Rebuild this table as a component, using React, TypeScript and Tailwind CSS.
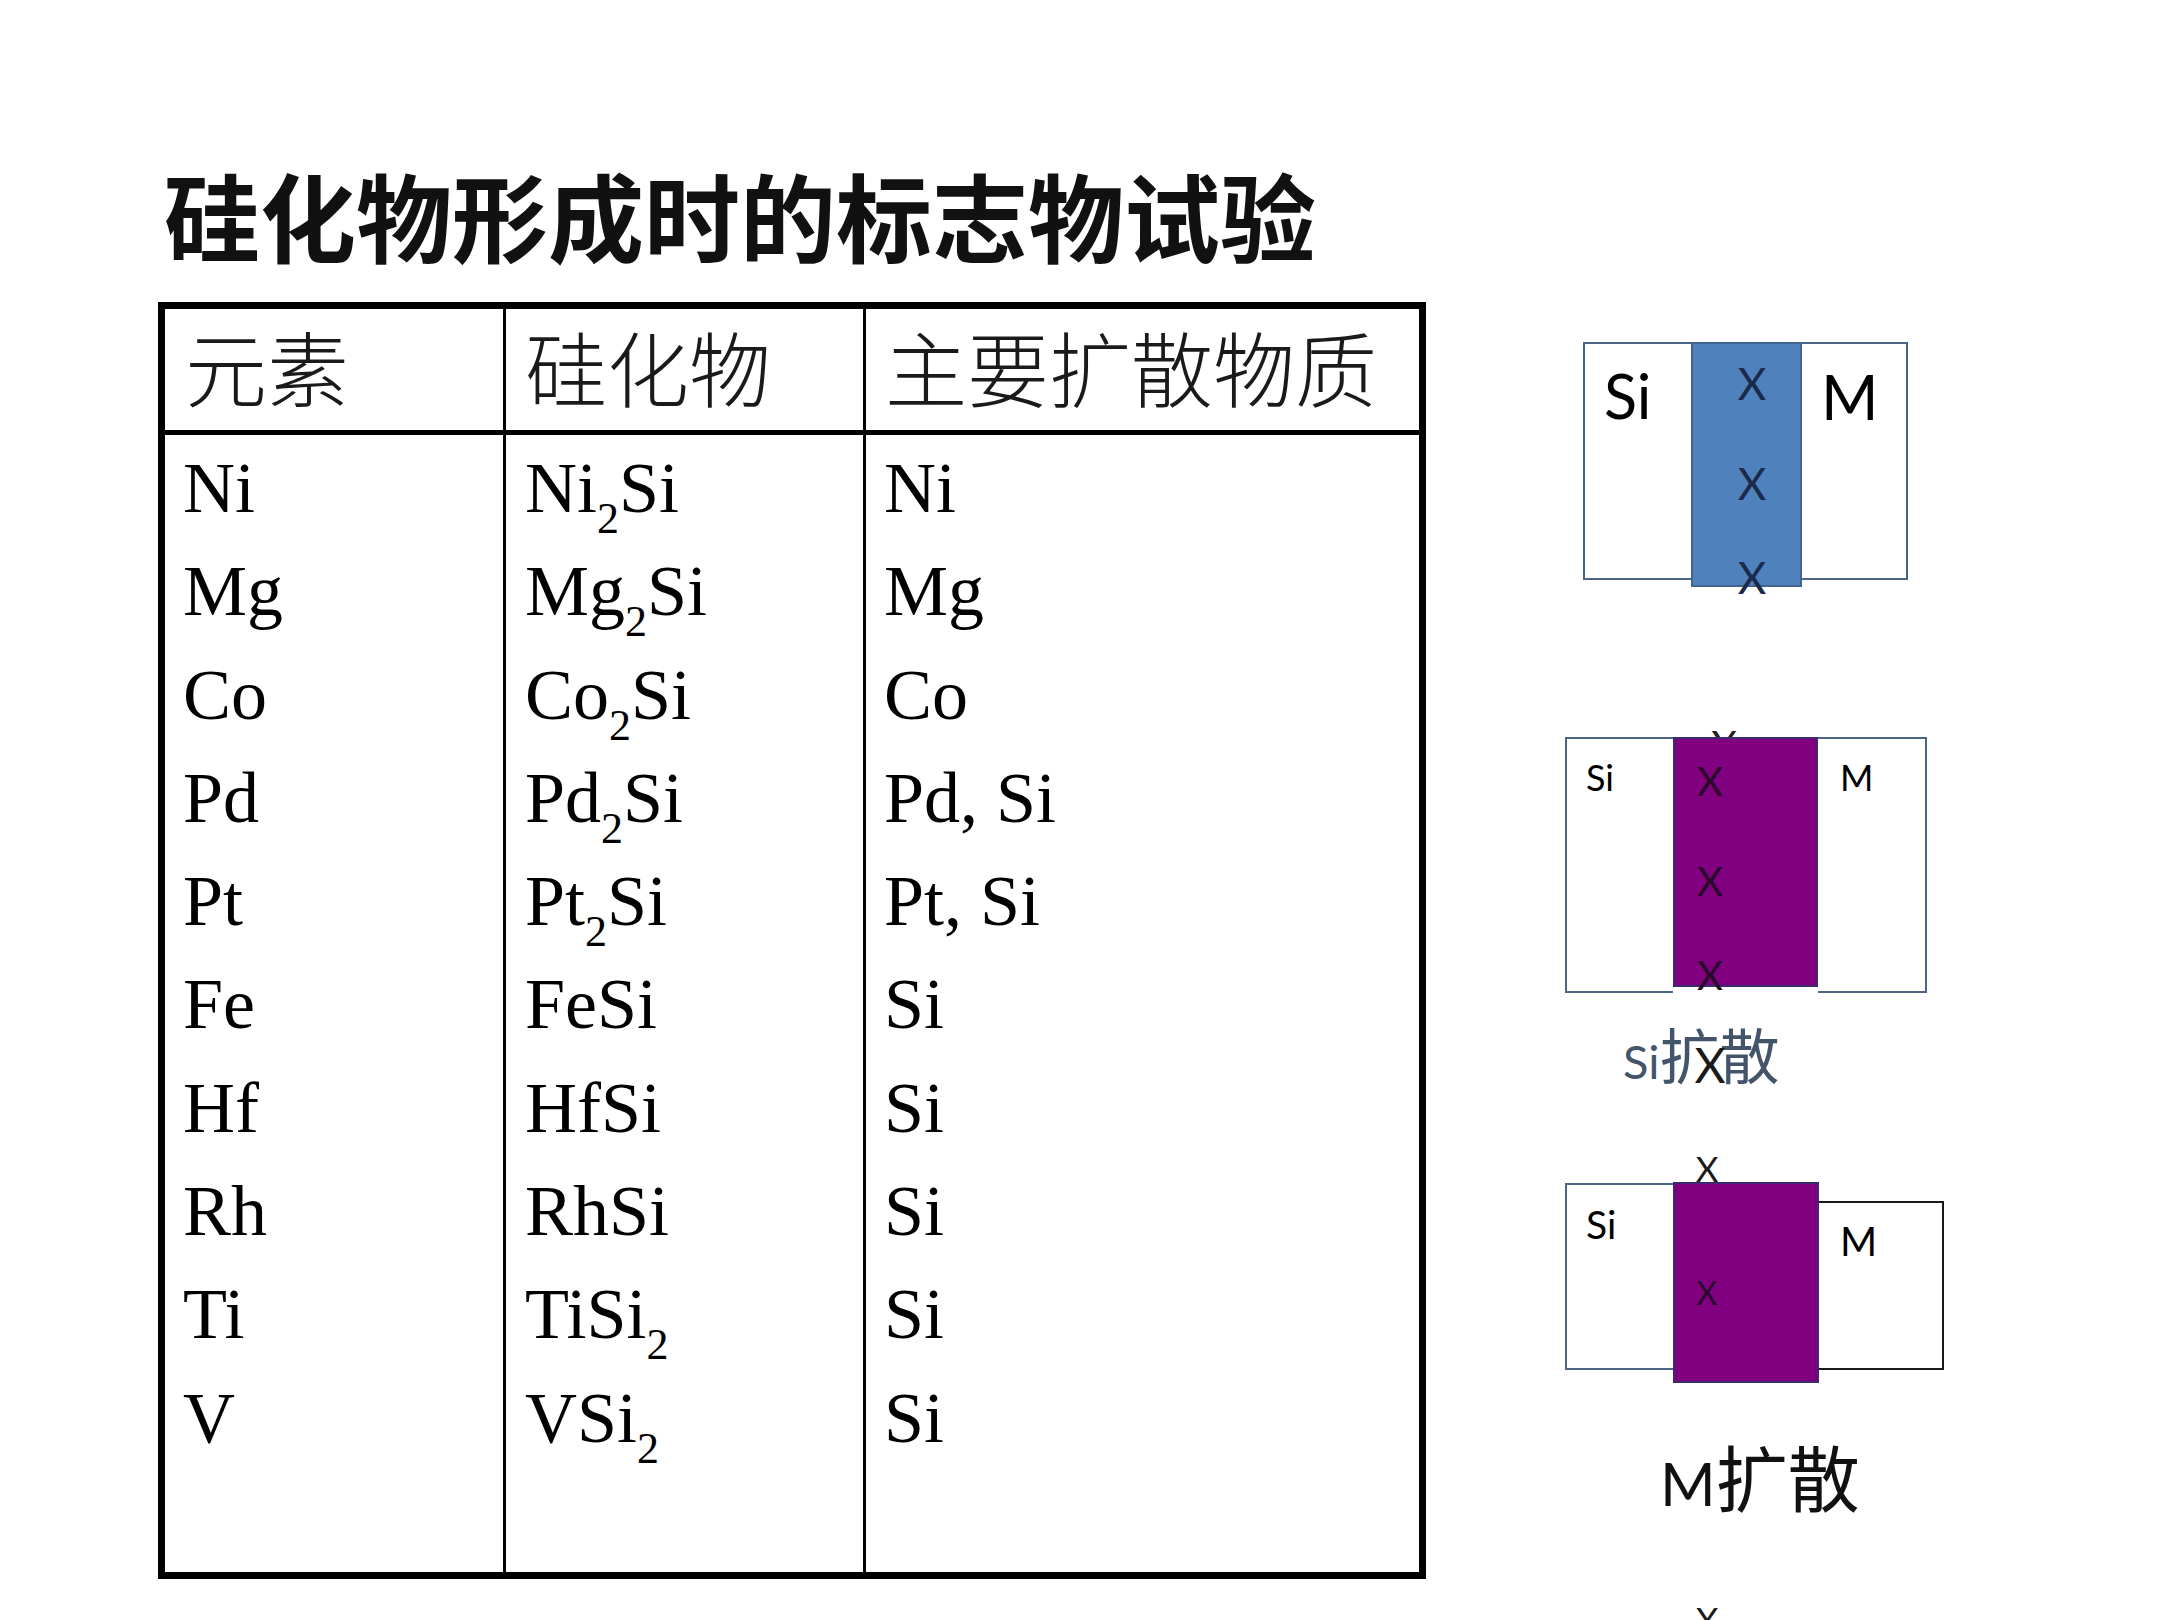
import React from 'react';

const SERIF = "font-['Liberation_Serif','Times_New_Roman',serif]";

const ROWS: [string, string, string][] = [
  ['Ni', 'Ni_2Si', 'Ni'],
  ['Mg', 'Mg_2Si', 'Mg'],
  ['Co', 'Co_2Si', 'Co'],
  ['Pd', 'Pd_2Si', 'Pd, Si'],
  ['Pt', 'Pt_2Si', 'Pt, Si'],
  ['Fe', 'FeSi', 'Si'],
  ['Hf', 'HfSi', 'Si'],
  ['Rh', 'RhSi', 'Si'],
  ['Ti', 'TiSi_2', 'Si'],
  ['V', 'VSi_2', 'Si'],
];

// "Ni_2Si" -> Ni, subscript 2, Si
const Formula = ({ f }: { f: string }) => {
  const parts = f.split(/_(\d)/);
  return (
    <>
      {parts.map((p, i) =>
        i % 2 === 1 ? (
          <span key={i} className="text-[44px] leading-none align-[-21px]">{p}</span>
        ) : (
          <React.Fragment key={i}>{p}</React.Fragment>
        )
      )}
    </>
  );
};

const Column = ({ items, className }: { items: React.ReactNode[]; className: string }) => (
  <div className={`flex flex-col pt-[2px] ${className}`}>
    {items.map((it, i) => (
      <div key={i} className="h-[103.3px] leading-[103.3px] whitespace-nowrap">{it}</div>
    ))}
  </div>
);

const Mark = ({ className }: { className: string }) => (
  <span className={`absolute w-[40px] text-center leading-none font-['Lato',sans-serif] ${className}`}>X</span>
);

export default function App() {
  return (
    <div className="w-[2160px] h-[1620px] overflow-hidden bg-white flex text-black">
      {/* Left: title + table */}
      <div className="pl-[158px] pt-[166px] flex flex-col">
        <h1 className="pl-[6px] text-[96px] leading-none font-bold font-['Noto_Sans_CJK_SC',sans-serif] text-[#111]">
          硅化物形成时的标志物试验
        </h1>

        <div className="mt-[40px] w-[1268px] h-[1277px] border-[7px] border-black flex flex-col">
          {/* Header */}
          <div className="flex h-[126px] border-b-[5px] border-black font-['Noto_Sans_CJK_SC',sans-serif] font-light text-[82px] leading-none text-[#1a1a1a]">
            <div className="w-[341px] border-r-[3px] border-black flex items-center pl-[20px] pb-[8px]">元素</div>
            <div className="w-[360px] border-r-[3px] border-black flex items-center pl-[19px] pb-[8px]">硅化物</div>
            <div className="flex-1 flex items-center pl-[19px] pb-[8px]">主要扩散物质</div>
          </div>

          {/* Body */}
          <div className={`flex flex-1 text-[72px] ${SERIF}`}>
            <Column className="w-[341px] border-r-[3px] border-black pl-[18px]" items={ROWS.map(r => r[0])} />
            <Column
              className="w-[360px] border-r-[3px] border-black pl-[19px]"
              items={ROWS.map(r => <Formula f={r[1]} />)}
            />
            <Column className="flex-1 pl-[18px]" items={ROWS.map(r => r[2])} />
          </div>
        </div>
      </div>

      {/* Right: diffusion diagrams */}
      <div className="ml-[139px] pt-[342px] flex flex-col font-['Lato',sans-serif]">
        {/* Diagram 1: blue marker layer */}
        <div className="relative ml-[18px] flex items-start">
          <div className="w-[108px] h-[238px] border-2 border-r-0 border-[#4a6684] pl-[19px] pt-[21px] text-[61px] leading-none">Si</div>
          <div className="w-[111px] h-[245px] bg-[#4f81bd] border-2 border-[#3f6590]" />
          <div className="w-[106px] h-[238px] border-2 border-l-0 border-[#4a6684] pl-[19px] pt-[21px] text-[62px] leading-none">M</div>
          <Mark className="left-[149px] top-[19px] text-[44px] text-[#1b2a4a]" />
          <Mark className="left-[149px] top-[119px] text-[44px] text-[#1b2a4a]" />
          <Mark className="left-[149px] top-[213px] text-[44px] text-[#1b2a4a]" />
        </div>

        {/* Diagram 2: Si diffusion */}
        <div className="relative mt-[150px] flex items-start">
          <div className="w-[108px] h-[256px] border-2 border-r-0 border-[#4a6684] pl-[19px] pt-[20px] text-[36px] leading-none">Si</div>
          <div className="relative z-10 w-[145px] h-[250px] bg-[#800080] border-2 border-[#3d2a6e]" />
          <div className="w-[109px] h-[256px] border-2 border-l-0 border-[#4a6684] pl-[22px] pt-[20px] text-[36px] leading-none">M</div>
          <Mark className="z-0 left-[139px] top-[-12px] text-[40px] text-[#222]" />
          <Mark className="z-20 left-[125px] top-[24px] text-[40px] text-[#2a0a2a]" />
          <Mark className="z-20 left-[125px] top-[124px] text-[40px] text-[#2a0a2a]" />
          <Mark className="z-20 left-[125px] top-[218px] text-[40px] text-[#2a0a2a]" />
        </div>

        <div className="relative mt-[30px] h-[66px] pl-[58px] flex items-baseline text-[#44546a] leading-none">
          <span className="text-[47px]">Si</span>
          <span className="text-[60px] font-['Noto_Sans_CJK_SC',sans-serif]">扩散</span>
          <Mark className="left-[125px] top-[18px] text-[48px] text-[#1a1a1a]" />
        </div>

        {/* Diagram 3: M diffusion */}
        <div className="relative mt-[93px] flex items-start">
          <div className="mt-[1px] w-[108px] h-[187px] border-2 border-r-0 border-[#4a6684] pl-[19px] pt-[20px] text-[39px] leading-none">Si</div>
          <div className="w-[146px] h-[201px] bg-[#800080] border-2 border-[#3d2a6e]" />
          <div className="mt-[19px] w-[125px] h-[169px] border-2 border-l-0 border-[#1a1a1a] pl-[21px] pt-[18px] text-[40px] leading-none">M</div>
          <Mark className="left-[122px] top-[-31px] text-[35px] text-[#1a1a1a]" />
          <Mark className="left-[122px] top-[95px] text-[32px] text-[#2a0a2a]" />
          <Mark className="left-[122px] top-[420px] text-[35px] text-[#1a1a1a]" />
        </div>

        <div className="mt-[56px] pl-[95px] flex items-baseline leading-none text-[#111]">
          <span className="text-[60px]">M</span>
          <span className="text-[72px] font-['Noto_Sans_CJK_SC',sans-serif]">扩散</span>
        </div>
      </div>
    </div>
  );
}
